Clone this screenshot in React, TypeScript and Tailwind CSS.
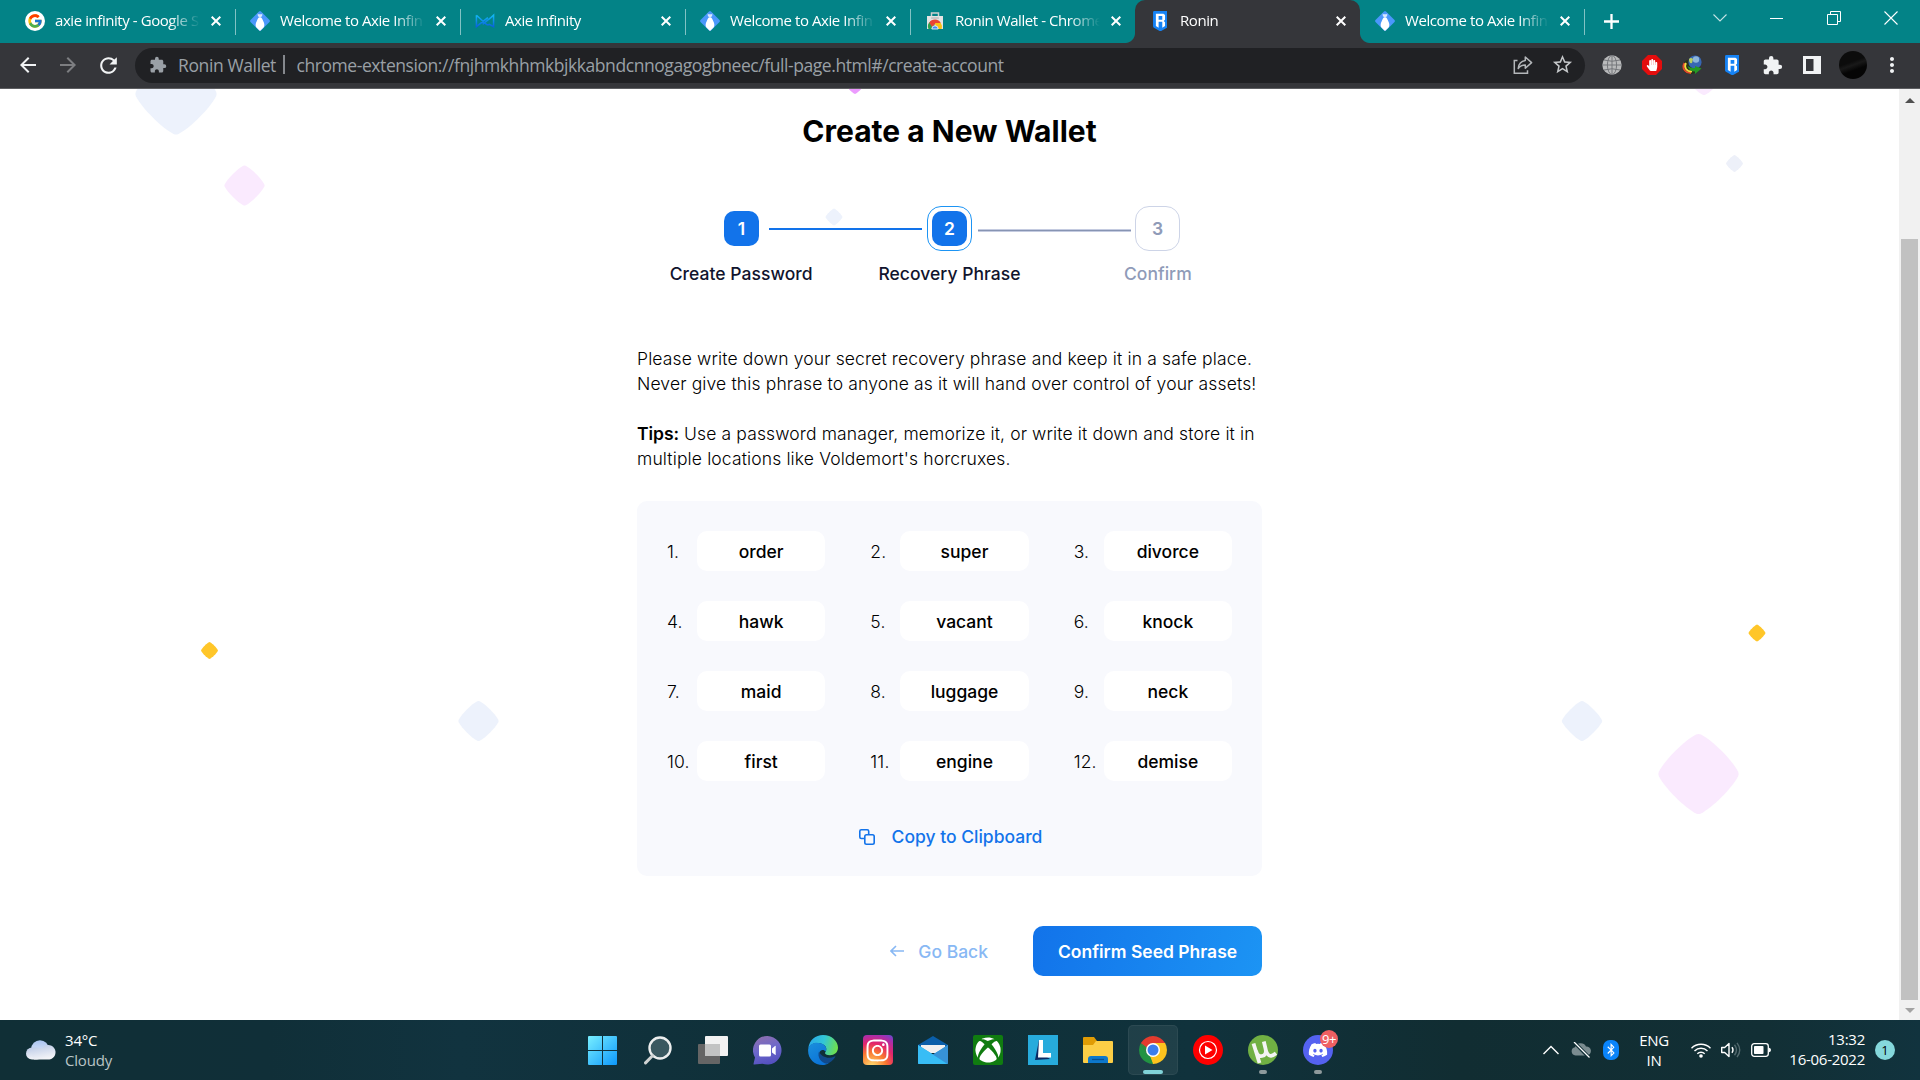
import type { ReactNode } from "react";
import { FcGoogle } from "react-icons/fc";
import { FaBluetoothB, FaDiscord, FaHandPaper, FaInstagram, FaXbox } from "react-icons/fa";
import { MdArrowBack, MdArrowForward, MdExtension, MdMoreVert, MdRefresh, MdStarBorder } from "react-icons/md";

const ui = "font-['Open_Sans','Noto_Sans',sans-serif]";

/* ---------- favicons ---------- */

function GoogleIcon() {
  return (
    <span className="flex h-5 w-5 items-center justify-center rounded-full bg-white">
      <FcGoogle size={16} />
    </span>
  );
}

function AxieIcon() {
  return (
    <svg width="20" height="20" viewBox="0 0 20 20">
      <path d="M9 .5q1-.8 2 0L19.5 9q.8 1 0 2L11 19.5q-1 .8-2 0L.5 11q-.8-1 0-2Z" fill="#4a97fb" />
      <path d="M7.6 2.6 9 3.6 10 3l1 .6 1.400-1-.3 2.600L10 6.400 7.900 5.200Z" fill="#d7e8ff" />
      <path d="M10 6.200c2 0 2.300 2 3.300 4 1.300 2.600 1.500 4.600.3 6.300L10 20l-3.600-3.500c-1.200-1.700-1-3.700.3-6.300 1-2 1.300-4 3.300-4Z" fill="#fff" />
    </svg>
  );
}

function MarketIcon() {
  return (
    <svg width="21" height="16" viewBox="0 0 21 16" fill="none" strokeWidth="1.600">
      <defs>
        <linearGradient id="mk" x1="0" y1="0" x2="0" y2="1">
          <stop offset="0" stopColor="#12b8f4" />
          <stop offset="1" stopColor="#0a62dc" />
        </linearGradient>
      </defs>
      <path d="M1.500 2v12L13.500 4.500M1.500 2 12 11.500q1.500 1.200 3 0l4.500 2.500V2L8 11.500M15 6l4.500-4v12" stroke="url(#mk)" />
    </svg>
  );
}

function StoreIcon() {
  return (
    <svg width="18" height="18" viewBox="0 0 18 18">
      <path d="M1 4h16v12.500q0 .5-.5.5h-15q-.5 0-.5-.5Z" fill="#e4e4e4" />
      <path d="M5.500 4V1h7v3" fill="none" stroke="#cfcfcf" strokeWidth="1.500" />
      <rect x="5" y="5.400" width="8" height="1.200" rx=".6" fill="#aaa" />
      <path d="M2.500 17a6.500 6.500 0 0 1 2-7.700L9 13l-3 4Z" fill="#2ba24c" />
      <path d="M3.300 10.700A6.500 6.500 0 0 1 14.800 11L9 12 6 15Z" fill="#ea4335" />
      <path d="M9 11h5.800a6.500 6.500 0 0 1 .8 6H10Z" fill="#fbc116" />
      <path d="M5.800 17a3.200 3.200 0 1 1 6.400 0Z" fill="#4688f1" stroke="#fff" strokeWidth=".8" />
    </svg>
  );
}

function RoninIcon({ h = 20 }: { h?: number }) {
  return (
    <svg width={h * 0.74} height={h} viewBox="0 0 14 19">
      <path d="M1.200 0h11.600Q14 0 14 1.200v13q0 1-.8 1.600L7.700 19H6.300L.8 15.800Q0 15.200 0 14.200v-13Q0 0 1.200 0Z" fill="#1683f5" />
      <path
        d="M2.700 2.500h7.200l1.500 1.400v4.300L10.200 9.400l1.200 1.200v3.700l-2.600 1.500V10.200H5.300v5.600L2.700 14.300ZM5.300 4.700v3.600h3.500V4.700Z"
        fill="#fff"
        fillRule="evenodd"
      />
    </svg>
  );
}

/* ---------- browser chrome ---------- */

const tabs: { title: string; icon: ReactNode; active?: boolean; rule?: boolean }[] = [
  { title: "axie infinity - Google S", icon: <GoogleIcon />, rule: true },
  { title: "Welcome to Axie Infin", icon: <AxieIcon />, rule: true },
  { title: "Axie Infinity", icon: <MarketIcon />, rule: true },
  { title: "Welcome to Axie Infin", icon: <AxieIcon />, rule: true },
  { title: "Ronin Wallet - Chrome", icon: <StoreIcon /> },
  { title: "Ronin", icon: <RoninIcon />, active: true },
  { title: "Welcome to Axie Infin", icon: <AxieIcon />, rule: true },
];

function CloseMark() {
  return (
    <svg width="10" height="10" viewBox="0 0 10 10" className="shrink-0" stroke="#fff" strokeWidth="2">
      <path d="M.7.700l8.600 8.600M9.300.700.7 9.300" />
    </svg>
  );
}

function TabStrip() {
  return (
    <div className="flex h-[43px] bg-[#038387] pl-[10px] text-white">
      {tabs.map((t, i) => (
        <div
          key={i}
          className={`relative flex items-center pb-px pl-[15px] pr-[14px] ${t.active ? "w-[225px] rounded-t-[10px] bg-[#35363a]" : i === 6 ? "w-[224px]" : "w-[225px]"}`}
        >
          {t.active && (
            <>
              <span className="absolute bottom-0 -left-[10px] h-[10px] w-[10px] bg-[radial-gradient(circle_at_0_0,#038387_9.500px,#35363a_10.500px)]" />
              <span className="absolute bottom-0 -right-[10px] h-[10px] w-[10px] bg-[radial-gradient(circle_at_100%_0,#038387_9.500px,#35363a_10.500px)]" />
            </>
          )}
          <span className="mr-[10px] flex w-5 shrink-0 justify-center">{t.icon}</span>
          <span className="mr-[8px] min-w-0 flex-1 whitespace-nowrap pb-[2px] text-[15px] leading-5 tracking-[-0.430px] [mask-image:linear-gradient(to_right,#000_calc(100%-34px),transparent_calc(100%-3px))]">
            {t.title}
          </span>
          <CloseMark />
          {t.rule && <span className="absolute -right-px top-[9px] h-[26px] w-px bg-[#82c2c4]" />}
        </div>
      ))}
      <svg className="ml-[20px] mt-[14px]" width="15" height="15" viewBox="0 0 15 15" stroke="#fff" strokeWidth="2.300">
        <path d="M7.500 0v15M0 7.500h15" />
      </svg>
      <div className="ml-auto flex pr-px pt-[4px]">
        <div className="flex h-7 w-[57px] items-center justify-center">
          <svg width="14" height="8" viewBox="0 0 14 8" fill="none" stroke="#c5e3e4" strokeWidth="1.100"><path d="m.5.500 6.500 6.500L13.500.500" /></svg>
        </div>
        <div className="flex h-7 w-[57px] items-center justify-center">
          <span className="h-px w-[13px] bg-white" />
        </div>
        <div className="flex h-7 w-[57px] items-center justify-center">
          <svg width="14" height="14" viewBox="0 0 14 14" fill="none" stroke="#fff" strokeWidth="1"><path d="M.5 3.500h10v10H.5ZM3.500 3V.5h10v10h-3" /></svg>
        </div>
        <div className="flex h-7 w-[57px] items-center justify-center">
          <svg width="14" height="14" viewBox="0 0 14 14" stroke="#fff" strokeWidth="1.100"><path d="m.5.500 13 13M13.500.500l-13 13" /></svg>
        </div>
      </div>
    </div>
  );
}

function Ext({ children }: { children: ReactNode }) {
  return <div className="flex w-10 items-center justify-center">{children}</div>;
}

function Toolbar() {
  return (
    <div className="flex h-[46px] items-center border-b border-[#5d5e61] bg-[#35363a]">
      <div className="flex w-[135px] items-center pb-px pl-[8px]">
        <div className="flex w-10 justify-center"><MdArrowBack size={24} color="#f1f3f4" /></div>
        <div className="flex w-10 justify-center"><MdArrowForward size={24} color="#7d7e81" /></div>
        <div className="flex w-10 justify-center"><MdRefresh size={25} color="#f1f3f4" /></div>
      </div>
      <div className="flex h-[35px] w-[1450px] items-center rounded-full bg-[#202124] pb-[2px] pl-[14px] pr-[11px] leading-[24px] text-[#9aa0a6]">
        <MdExtension size={18} color="#9aa0a6" />
        <span className="ml-[11px] w-[97px] whitespace-nowrap text-[17.500px] tracking-[-0.380px]">Ronin Wallet</span>
        <span className="ml-[8px] h-[19px] w-[1.500px] bg-[#85888d]" />
        <span className="ml-[12px] whitespace-nowrap text-[17.500px] tracking-[-0.430px]">
          chrome-extension://fnjhmkhhmkbjkkabndcnnogagogbneec/full-page.html#/create-account
        </span>
        <svg className="ml-auto" width="20" height="20" viewBox="0 0 20 20" fill="none" stroke="#b4b7ba" strokeWidth="1.500">
          <path d="M4.500 5.500H1.300v12.800h13.200v-3" />
          <path d="M12.300 2v3.400C7.500 6 5.600 9.300 5.200 13.500c1.700-2.500 3.800-3.600 7.100-3.600v3.400L18.600 7.600Z" strokeLinejoin="round" />
        </svg>
        <MdStarBorder className="ml-[18px]" size={23} color="#c4c7c9" />
      </div>
      <div className="ml-[7px] flex items-center pb-px">
        <Ext>
          <svg width="20" height="20" viewBox="0 0 20 20" fill="none" stroke="#74767a" strokeWidth="1">
            <circle cx="10" cy="10" r="9.700" fill="#b9babb" stroke="none" />
            <ellipse cx="10" cy="10" rx="4.600" ry="9.500" />
            <path d="M10 0v20M0 10h20M2 5q8 2.500 16 0M2 15q8-2.500 16 0" />
          </svg>
        </Ext>
        <Ext>
          <span className="flex h-5 w-5 items-center justify-center bg-[#e40d0d] [clip-path:polygon(30%_0,70%_0,100%_30%,100%_70%,70%_100%,30%_100%,0_70%,0_30%)]">
            <FaHandPaper size={12} color="#fff" />
          </span>
        </Ext>
        <Ext>
          <svg width="20" height="20" viewBox="0 0 20 20">
            <path d="M5 5C-1 8-1 15 4 18c4 2 8 1 10-1l-5-10Z" fill="#27331c" />
            <path d="M2.500 8c-3 5 .5 10 6.500 10" fill="none" stroke="#e7472d" strokeWidth="1.800" />
            <path d="M4 8c-2.500 4.500.5 8.500 6 8.500" fill="none" stroke="#f7d83e" strokeWidth="1.800" />
            <circle cx="13" cy="7" r="6.600" fill="#3767b4" />
            <circle cx="14" cy="4.500" r="3.200" fill="#8db6dc" />
            <path d="M7 4q2-2 4 0l-1 4q-3 1-3-4Z" fill="#b9cf62" />
            <path d="M5.500 11q3 2.500 7.500 2v-2l6.500 2.500L13 19v-2.500q-6 0-7.500-5.500Z" fill="#259a24" />
          </svg>
        </Ext>
        <Ext><RoninIcon h={20} /></Ext>
        <Ext><MdExtension size={21} color="#f1f3f4" /></Ext>
        <Ext>
          <svg width="18" height="18" viewBox="0 0 18 18"><path d="M0 0h18v18H0Zm3 3v12h7.500V3Z" fill="#f1f3f4" fillRule="evenodd" /></svg>
        </Ext>
        <Ext><span className="ml-px h-7 w-7 rounded-full bg-[linear-gradient(160deg,#0c0c0c_40%,#191919_50%,#050505_65%)]" /></Ext>
        <Ext><MdMoreVert size={24} color="#f1f3f4" /></Ext>
      </div>
    </div>
  );
}

/* ---------- page ---------- */

const diamonds = [
  { x: 176, y: 5, r: 41, c: "#edf2fc" },
  { x: 244.5, y: 96.500, r: 20.300, c: "#faeafe" },
  { x: 209.5, y: 561.500, r: 8.500, c: "#ffc629" },
  { x: 478.5, y: 632, r: 20.300, c: "#edf2fc" },
  { x: 855, y: -4, r: 9, c: "#ec9bfe" },
  { x: 834, y: 128, r: 8.500, c: "#edf2fc" },
  { x: 1704, y: -14, r: 20.300, c: "#faeafe" },
  { x: 1734.5, y: 74.500, r: 8.500, c: "#edf0f9" },
  { x: 1757, y: 544, r: 8.500, c: "#ffc629" },
  { x: 1582, y: 632, r: 20.300, c: "#edf2fc" },
  { x: 1698.5, y: 685, r: 40.500, c: "#faeafe" },
];

function Backdrop() {
  return (
    <svg className="absolute inset-0" width="1899" height="931" viewBox="0 0 1899 931">
      {diamonds.map((d, i) => (
        <path
          key={i}
          transform={`translate(${d.x} ${d.y}) scale(${d.r / 40})`}
          d="M-2.500-39q2.500-1.200 5 0C14-33 33-14 39-2.500q1.200 2.500 0 5C33 14 14 33 2.500 39q-2.500 1.200-5 0C-14 33-33 14-39 2.500q-1.200-2.500 0-5C-33-14-14-33-2.500-39Z"
          fill={d.c}
        />
      ))}
    </svg>
  );
}

const words = ["order", "super", "divorce", "hawk", "vacant", "knock", "maid", "luggage", "neck", "first", "engine", "demise"];

function Steps() {
  return (
    <div className="mt-[55px]">
      <div className="flex h-[45px] items-center pl-[82px] text-[17.500px] font-semibold">
        <div className="flex w-[45px] justify-center">
          <span className="flex h-[35px] w-[35px] items-center justify-center rounded-[10px] bg-[#1273ea] pt-px text-white">1</span>
        </div>
        <span className="ml-[5px] h-[2px] w-[153px] bg-[#1273ea]" />
        <div className="ml-[5px] flex h-[45px] w-[45px] items-center justify-center rounded-[14px] border border-[#1c94f4]">
          <span className="flex h-[35px] w-[35px] items-center justify-center rounded-[10px] bg-[#1273ea] pt-px text-white">2</span>
        </div>
        <span className="ml-[6px] mt-[3px] h-[3px] w-[153px] border-y border-[#c4cbe0] bg-[#8794b3]" />
        <div className="ml-[4px] flex h-[45px] w-[45px] items-center justify-center rounded-[14px] border border-[#cdd4e7] pt-px text-[#8f9bb8]">3</div>
      </div>
      <div className="mt-[10px] grid grid-cols-3 text-center text-[17.500px] font-[530] leading-[25px] tracking-[0.040px] text-[#11142d]">
        <span>Create Password</span>
        <span>Recovery Phrase</span>
        <span className="text-[#8f9bb8]">Confirm</span>
      </div>
    </div>
  );
}

function WalletPage() {
  return (
    <div className="relative flex-1 overflow-hidden bg-white font-['Inter',sans-serif] text-black">
      <Backdrop />
      <div className="relative mx-auto w-[625px] pt-[22px]">
        <h1 className="text-center text-[30px] font-[650] leading-[40px]">Create a New Wallet</h1>
        <Steps />
        <p className="mt-[60px] whitespace-nowrap text-[17.500px] font-[350] leading-[25px] tracking-[0.140px]">
          Please write down your secret recovery phrase and keep it in a safe place.
          <br />
          Never give this phrase to anyone as it will hand over control of your assets!
        </p>
        <p className="mt-[25px] whitespace-nowrap text-[17.500px] font-[350] leading-[25px] tracking-[0.130px]">
          <span className="font-semibold tracking-[-0.050px]">Tips:</span> Use a password manager, memorize it, or write it down and store it in
          <br />
          multiple locations like Voldemort's horcruxes.
        </p>
        <div className="mt-[30px] h-[375px] rounded-[10px] bg-[#f8f9fd] p-[30px]">
          <div className="grid grid-cols-3 gap-x-[45px] gap-y-[30px] text-[17.500px]">
            {words.map((w, i) => (
              <div key={w} className="flex h-10 items-center">
                <span className="w-[30px] shrink-0 pt-[2px] font-[350] tracking-[0.140px]">{i + 1}.</span>
                <span className="flex h-10 flex-1 items-center justify-center rounded-[10px] bg-white pt-[2px] font-[550]">{w}</span>
              </div>
            ))}
          </div>
          <div className="mt-[43px] flex h-[25px] items-center justify-center gap-[17px] pl-[2px] text-[17.500px] font-[550] text-[#1273ea]">
            <svg width="16" height="16" viewBox="0 0 16 16" fill="none" stroke="#1273ea" strokeWidth="1.600">
              <path d="M5.800 9.500H2.300Q.8 9.500.8 8V2.300Q.8.800 2.300.800h5.900q1.500 0 1.500 1.500v3.200" />
              <rect x="5.800" y="5.800" width="9.400" height="9.400" rx="1.700" />
            </svg>
            <span className="pt-[2px]">Copy to Clipboard</span>
          </div>
        </div>
        <div className="mt-[50px] flex items-center justify-end text-[17.500px] font-[550]">
          <div className="mr-[45px] flex items-center gap-[14px] text-[#88b8f4]">
            <svg width="14" height="12" viewBox="0 0 14 12" fill="none" stroke="#88b8f4" strokeWidth="1.600">
              <path d="M14 6H1M6 1 1 6l5 5" />
            </svg>
            <span className="pt-[2px]">Go Back</span>
          </div>
          <button className="h-[50px] w-[229px] rounded-[10px] bg-[linear-gradient(105deg,#1273ea,#1c94f4)] pt-[2px] font-semibold text-white">
            Confirm Seed Phrase
          </button>
        </div>
      </div>
    </div>
  );
}

function Scrollbar() {
  return (
    <div className="flex w-[21px] flex-col items-center bg-[#f1f1f1]">
      <svg className="mt-[9px]" width="10" height="5" viewBox="0 0 10 5"><path d="M5 0 10 5H0Z" fill="#505050" /></svg>
      <div className="mt-[136px] h-[761px] w-[17px] bg-[#c1c1c1]" />
      <svg className="mt-[8px]" width="10" height="5" viewBox="0 0 10 5"><path d="M5 5 10 0H0Z" fill="#a3a3a3" /></svg>
    </div>
  );
}

/* ---------- taskbar ---------- */

function Cell({ children, mark }: { children: ReactNode; mark?: boolean }) {
  return (
    <div className="relative flex h-[60px] w-[55px] items-center justify-center">
      {children}
      {mark && <span className="absolute bottom-[6px] h-1 w-2 rounded-full bg-[#8e9a9c]" />}
    </div>
  );
}

function StartIcon() {
  return (
    <svg width="29" height="29" viewBox="0 0 29 29">
      <defs>
        <linearGradient id="st" x1="0" y1="0" x2="29" y2="29" gradientUnits="userSpaceOnUse">
          <stop offset="0" stopColor="#78efff" />
          <stop offset="1" stopColor="#0d98fb" />
        </linearGradient>
      </defs>
      <path d="M1 0h13v14H0V1Q0 0 1 0Zm14 0h13q1 0 1 1v13H15ZM0 15h14v14H1q-1 0-1-1Zm15 0h14v13q0 1-1 1H15Z" fill="url(#st)" />
    </svg>
  );
}

function SearchIcon() {
  return (
    <svg width="28" height="29" viewBox="0 0 28 29" fill="none">
      <circle cx="16" cy="12" r="10.500" fill="#3a5860" stroke="#eceeee" strokeWidth="2.400" />
      <path d="m8.500 19.700-7 7.200" stroke="#cfd2d2" strokeWidth="3" strokeLinecap="round" />
    </svg>
  );
}

function TaskViewIcon() {
  return (
    <svg width="30" height="28" viewBox="0 0 30 28">
      <rect x="0" y="8" width="22" height="20" rx="1" fill="#656565" />
      <rect x="7" y="0" width="23" height="20" rx="1" fill="#f2f2f2" />
      <rect x="7" y="8" width="15" height="12" fill="#c2c3c3" />
    </svg>
  );
}

function ChatIcon() {
  return (
    <svg width="29" height="29" viewBox="0 0 29 29">
      <defs>
        <linearGradient id="ch" x1=".2" y1="0" x2=".5" y2="1">
          <stop offset="0" stopColor="#8e6fae" />
          <stop offset=".5" stopColor="#6c68cb" />
          <stop offset="1" stopColor="#5450bf" />
        </linearGradient>
      </defs>
      <path d="M14.500 0a14.300 14.300 0 1 1-5 27.800L1.200 28.500Q.3 28.500.6 27.600L2 21.500A14.300 14.300 0 0 1 14.500 0Z" fill="url(#ch)" />
      <rect x="6" y="8.500" width="12" height="12" rx="1.500" fill="#fff" />
      <path d="m19 12.500 3-2.500q.7-.4.700.4v8q0 .8-.7.400l-3-2.400Z" fill="#fff" />
    </svg>
  );
}

function EdgeIcon() {
  return (
    <svg width="30" height="30" viewBox="0 0 30 30">
      <defs>
        <linearGradient id="e1" x1="0" y1=".3" x2="1" y2=".5">
          <stop offset="0" stopColor="#29a9ea" />
          <stop offset=".5" stopColor="#32c6d6" />
          <stop offset="1" stopColor="#6fe04c" />
        </linearGradient>
        <linearGradient id="e2" x1="0" y1="0" x2=".6" y2="1">
          <stop offset="0" stopColor="#1b8fdc" />
          <stop offset="1" stopColor="#0a73d8" />
        </linearGradient>
      </defs>
      <path d="M.3 13C1.500 5 7.500 0 15 0c9 0 15 6.500 15 12.500 0 5-3.800 7.700-8 7.700-3.500 0-5-1.200-5-2.200 0-.8 1.300-1.500 1.300-4C18.300 10.500 14 8 9.500 8 5 8 2 10 .3 13Z" fill="url(#e1)" />
      <path d="M.2 14C1 10 4.500 7.800 9 7.800c5 0 9.300 2.800 9.300 6.200 0 1-.3 2-.8 2.600-.6-1.200-2-1.800-3.200-1.600-3 .6-3.800 4-2.500 7 1.500 3.700 5 6 9 6.200-2 1.200-4 1.800-6.300 1.800C6 30-.8 23 .2 14Z" fill="url(#e2)" />
      <path d="M11 16.500C9 22 13 28 19 28.800c3-.9 6.300-3.400 8.300-6.800.3-.6-.2-.8-.8-.5-5.500 2.700-13 1-15.500-5Z" fill="#114a8b" />
    </svg>
  );
}

function MailIcon() {
  return (
    <svg width="30" height="28" viewBox="0 0 30 28">
      <path d="M15 0 30 9v5H0V9Z" fill="#0a5ea9" />
      <path d="M3 9h24v8H3Z" fill="#f0f0f0" />
      <path d="M0 9v18q0 1 1 1h28q1 0 1-1V9L15 18.500Z" fill="#2ea7e9" />
      <path d="M0 9v18q0 1 1 1h28L15 18.500Z" fill="#38bdf5" />
      <path d="M30 9 15 18.500 30 28Z" fill="#3792d6" />
    </svg>
  );
}

function FolderIcon() {
  return (
    <svg width="30" height="27" viewBox="0 0 30 27">
      <path d="M0 1q0-1 1-1h10l3 4h15v8H0Z" fill="#e09c05" />
      <path d="M0 8h10l3-4h16q1 0 1 1v20q0 1-1 1H1q-1 0-1-1Z" fill="#fcce46" />
      <path d="M5 26v-4q0-3 3-3h14q3 0 3 3v4Z" fill="#0d78cc" />
      <path d="M9 22.500h12" stroke="#084f91" strokeWidth="1.300" />
    </svg>
  );
}

function ChromeIcon() {
  return (
    <svg width="28" height="28" viewBox="0 0 28 28">
      <path d="M14 14 1.900 7A14 14 0 0 1 26.100 7Z" fill="#e33b2e" />
      <path d="M14 14V7h12.100A14 14 0 0 1 14 28Z" fill="#fcc31e" />
      <path d="M14 14 14 28A14 14 0 0 1 1.900 7l6 10.500Z" fill="#229342" />
      <path d="m20.060 17.500-6.060 10.500-3-8Z" fill="#fcc31e" />
      <path d="M14 14 8 17.600 1.900 7H14Z" fill="#e33b2e" />
      <path d="M7.940 17.500 1.900 7 11 14v7L14 28Z" fill="#229342" />
      <circle cx="14" cy="14" r="7" fill="#fff" />
      <circle cx="14" cy="14" r="5.500" fill="#3b7ded" />
    </svg>
  );
}

function Taskbar() {
  return (
    <div className="flex h-[60px] bg-[linear-gradient(90deg,#102f36_0%,#102f38_14%,#11333f_24%,#0f2f37_45%,#10323c_62%,#112d32_76%,#122f35_92%,#11333e_100%)] text-[15px] leading-5 text-white">
      <div className="flex w-[575px] items-center pl-[26px]">
        <svg width="30" height="20" viewBox="0 0 30 20">
          <defs>
            <linearGradient id="cl" x1="0" y1="0" x2="0" y2="1"><stop offset="0" stopColor="#a9c3f1" /><stop offset="1" stopColor="#eef1f8" /></linearGradient>
            <linearGradient id="cf" x1="0" y1="0" x2=".3" y2="1"><stop offset="0" stopColor="#b9c8e6" /><stop offset="1" stopColor="#f2f3f7" /></linearGradient>
          </defs>
          <circle cx="14" cy="9" r="8.800" fill="url(#cl)" />
          <rect x="0" y="7.500" width="17" height="12" rx="6" fill="url(#cf)" />
          <path d="M8 19.500a7 7 0 0 1 8-11 7.300 7.300 0 1 1 7.500 11Z" fill="url(#cf)" />
        </svg>
        <div className="ml-[9px] tracking-[-0.200px]">
          <div>34°C</div>
          <div className="text-[#b9c4c6]">Cloudy</div>
        </div>
      </div>
      <div className="flex">
        <Cell><StartIcon /></Cell>
        <Cell><SearchIcon /></Cell>
        <Cell><TaskViewIcon /></Cell>
        <Cell><ChatIcon /></Cell>
        <Cell><EdgeIcon /></Cell>
        <Cell>
          <span className="flex h-[30px] w-[30px] items-center justify-center rounded-[4px] bg-[radial-gradient(circle_at_30%_105%,#ffd36b_5%,#f9772f_38%,#e3256b_62%,#a52fb0_85%,#5a4fd0_100%)]">
            <FaInstagram size={25} color="#fff" />
          </span>
        </Cell>
        <Cell><MailIcon /></Cell>
        <Cell>
          <span className="flex h-[30px] w-[30px] items-center justify-center rounded-[2px] bg-[#107c10]"><FaXbox size={26} color="#fff" /></span>
        </Cell>
        <Cell>
          <svg width="30" height="30" viewBox="0 0 30 30">
            <path d="M0 0h30v30H0Z" fill="#27abdc" />
            <path d="m11 5-4 20 15-1-9-6Z" fill="#0b2a63" />
            <path d="M11 5h4v13h8v4.500H10Z" fill="#fff" />
          </svg>
        </Cell>
        <Cell><FolderIcon /></Cell>
        <Cell>
          <span className="relative flex h-[50px] w-[50px] items-center justify-center rounded-[5px] border border-white/5 bg-white/[0.07]">
            <ChromeIcon />
            <span className="absolute bottom-0 h-1 w-5 rounded-full bg-[#80d3d8]" />
          </span>
        </Cell>
        <Cell>
          <svg width="30" height="30" viewBox="0 0 30 30">
            <circle cx="15" cy="15" r="15" fill="#f00" />
            <circle cx="15" cy="15" r="8.500" fill="none" stroke="#fff" strokeWidth="1.200" />
            <path d="m12 10.500 7.500 4.500-7.500 4.500Z" fill="#fff" />
          </svg>
        </Cell>
        <Cell mark>
          <svg width="30" height="30" viewBox="0 0 30 30">
            <circle cx="15" cy="15" r="15" fill="#71b043" />
            <path d="M5.500 8.500 11.500 28M8 16c1.500 5 3.500 5.500 6 5 3.500-.7 4.500-3.500 3.500-7.500L15.800 6.500M17.500 13.500c1 5 2.500 7.500 5.500 7.300 2-.2 3.500-1.300 5-2.500" fill="none" stroke="#f4f4f4" strokeWidth="3.800" />
          </svg>
        </Cell>
        <Cell mark>
          <span className="flex h-[30px] w-[30px] items-center justify-center rounded-full bg-[#5562f0]"><FaDiscord size={20} color="#fff" /></span>
          <span className="absolute left-[30px] top-[10px] flex h-[18px] w-[18px] items-center justify-center rounded-full bg-[#ef5f62] text-[13px] leading-none tracking-[-0.500px]">9+</span>
        </Cell>
      </div>
      <div className="ml-auto flex items-center pr-[25px]">
        <div className="flex w-[30px] justify-center">
          <svg width="16" height="10" viewBox="0 0 16 10" fill="none" stroke="#fff" strokeWidth="1.400"><path d="m.5 9 7.500-7.500L15.500 9" /></svg>
        </div>
        <div className="flex w-[30px] justify-center">
          <svg width="20" height="16" viewBox="0 0 20 16">
            <path d="M4.500 13.500A4.200 4.200 0 0 1 4 5.200 6 6 0 0 1 15 4.500a4.500 4.500 0 0 1 .8 9Z" fill="#7b8c90" />
            <path d="m3 0 15 15.500" stroke="#102f36" strokeWidth="3.500" />
            <path d="m3 0 15.500 15.500" stroke="#fff" strokeWidth="1.300" />
          </svg>
        </div>
        <div className="flex w-[30px] justify-center">
          <span className="flex h-5 w-4 items-center justify-center rounded-[7px] bg-[#0a84fa]"><FaBluetoothB size={14} color="#fff" /></span>
        </div>
        <div className="w-[60px] pr-1 text-center tracking-[-0.300px]">
          <div>ENG</div>
          <div>IN</div>
        </div>
        <div className="flex w-[30px] justify-center">
          <svg width="20" height="16" viewBox="0 0 20 16" fill="none" stroke="#fff" strokeWidth="1.400">
            <path d="M.5 6.200a13.500 13.500 0 0 1 19 0M3.500 9a9.200 9.200 0 0 1 13 0M6.300 11.700a5.300 5.300 0 0 1 7.400 0" />
            <circle cx="10" cy="14" r="1.800" fill="#fff" stroke="none" />
          </svg>
        </div>
        <div className="flex w-[30px] justify-center">
          <svg width="20" height="16" viewBox="0 0 20 16" fill="none" strokeWidth="1.400" stroke="#fff">
            <path d="M.7 5.500h3L8 1.500v13l-4.300-4h-3Z" strokeLinejoin="round" />
            <path d="M11 5.200q2 2.800 0 5.600" />
            <path d="M13.500 2.800q4 5.200 0 10.400M16 .8q5.500 7.200 0 14.400" stroke="#52696e" />
          </svg>
        </div>
        <div className="flex w-[30px] justify-center">
          <svg width="20" height="14" viewBox="0 0 20 14">
            <rect x=".7" y=".7" width="16.600" height="12.600" rx="2.500" fill="none" stroke="#fff" strokeWidth="1.300" />
            <rect x="3" y="3" width="9.500" height="8" rx=".8" fill="#fff" />
            <path d="M18 4.800q2 .2 2 2.200t-2 2.200Z" fill="#fff" />
          </svg>
        </div>
        <div className="w-[89px] whitespace-nowrap pb-[2px] text-right tracking-[-0.260px]">
          <div>13:32</div>
          <div>16-06-2022</div>
        </div>
        <span className="ml-[10px] flex h-5 w-5 items-center justify-center rounded-full bg-[#85d8dc] text-[13px] text-black">1</span>
      </div>
    </div>
  );
}

export default function App() {
  return (
    <div className={`flex h-[1080px] w-[1920px] flex-col overflow-hidden ${ui}`}>
      <TabStrip />
      <Toolbar />
      <div className="flex h-[931px]">
        <WalletPage />
        <Scrollbar />
      </div>
      <Taskbar />
    </div>
  );
}
